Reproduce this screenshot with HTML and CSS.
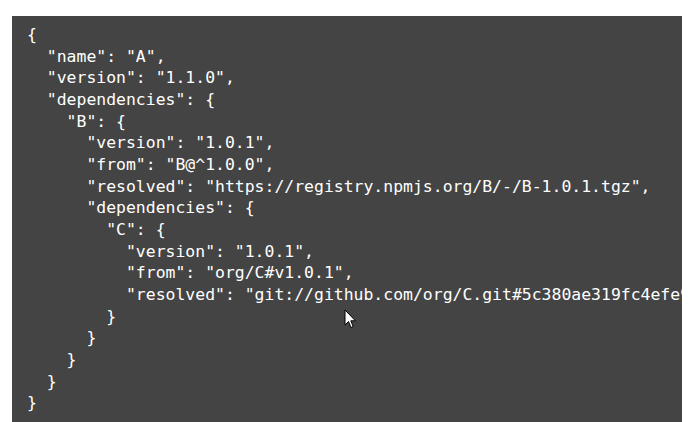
FILE: index.html
```html
<!DOCTYPE html>
<html>
<head>
<meta charset="utf-8">
<link rel="stylesheet" href="styles.css">
</head>
<body>
<div class="page">
<pre class="code">{
  "name": "A",
  "version": "1.1.0",
  "dependencies": {
    "B": {
      "version": "1.0.1",
      "from": "B@^1.0.0",
      "resolved": "https://registry.npmjs.org/B/-/B-1.0.1.tgz",
      "dependencies": {
        "C": {
          "version": "1.0.1",
          "from": "org/C#v1.0.1",
          "resolved": "git://github.com/org/C.git#5c380ae319fc4efe9e7f2d9c78b0faa588fd99b4"
        }
      }
    }
  }
}</pre>
</div>
<svg class="cursor" width="13" height="20" viewBox="0 0 13 20"><path d="M1 1 L1 16 L4.5 12.5 L7 18.5 L9.2 17.6 L6.8 11.8 L11.5 11.8 Z" fill="#fff" stroke="#000" stroke-width="1" stroke-linejoin="round"/></svg>
</body>
</html>
```
FILE: styles.css
```css
html, body {
  margin: 0;
  padding: 0;
  background: #fff;
  overflow: hidden;
}
.page {
  padding: 16px 13px 0 12px;
}
.code {
  margin: 0;
  background: #444444;
  color: #ffffff;
  font-family: "DejaVu Sans Mono", "Liberation Mono", monospace;
  font-size: 16.45px;
  line-height: 21.65px;
  padding: 8px 15px 20px 15px;
  overflow: hidden;
  white-space: pre;
}
.cursor {
  position: absolute;
  left: 344px;
  top: 309px;
}
```
